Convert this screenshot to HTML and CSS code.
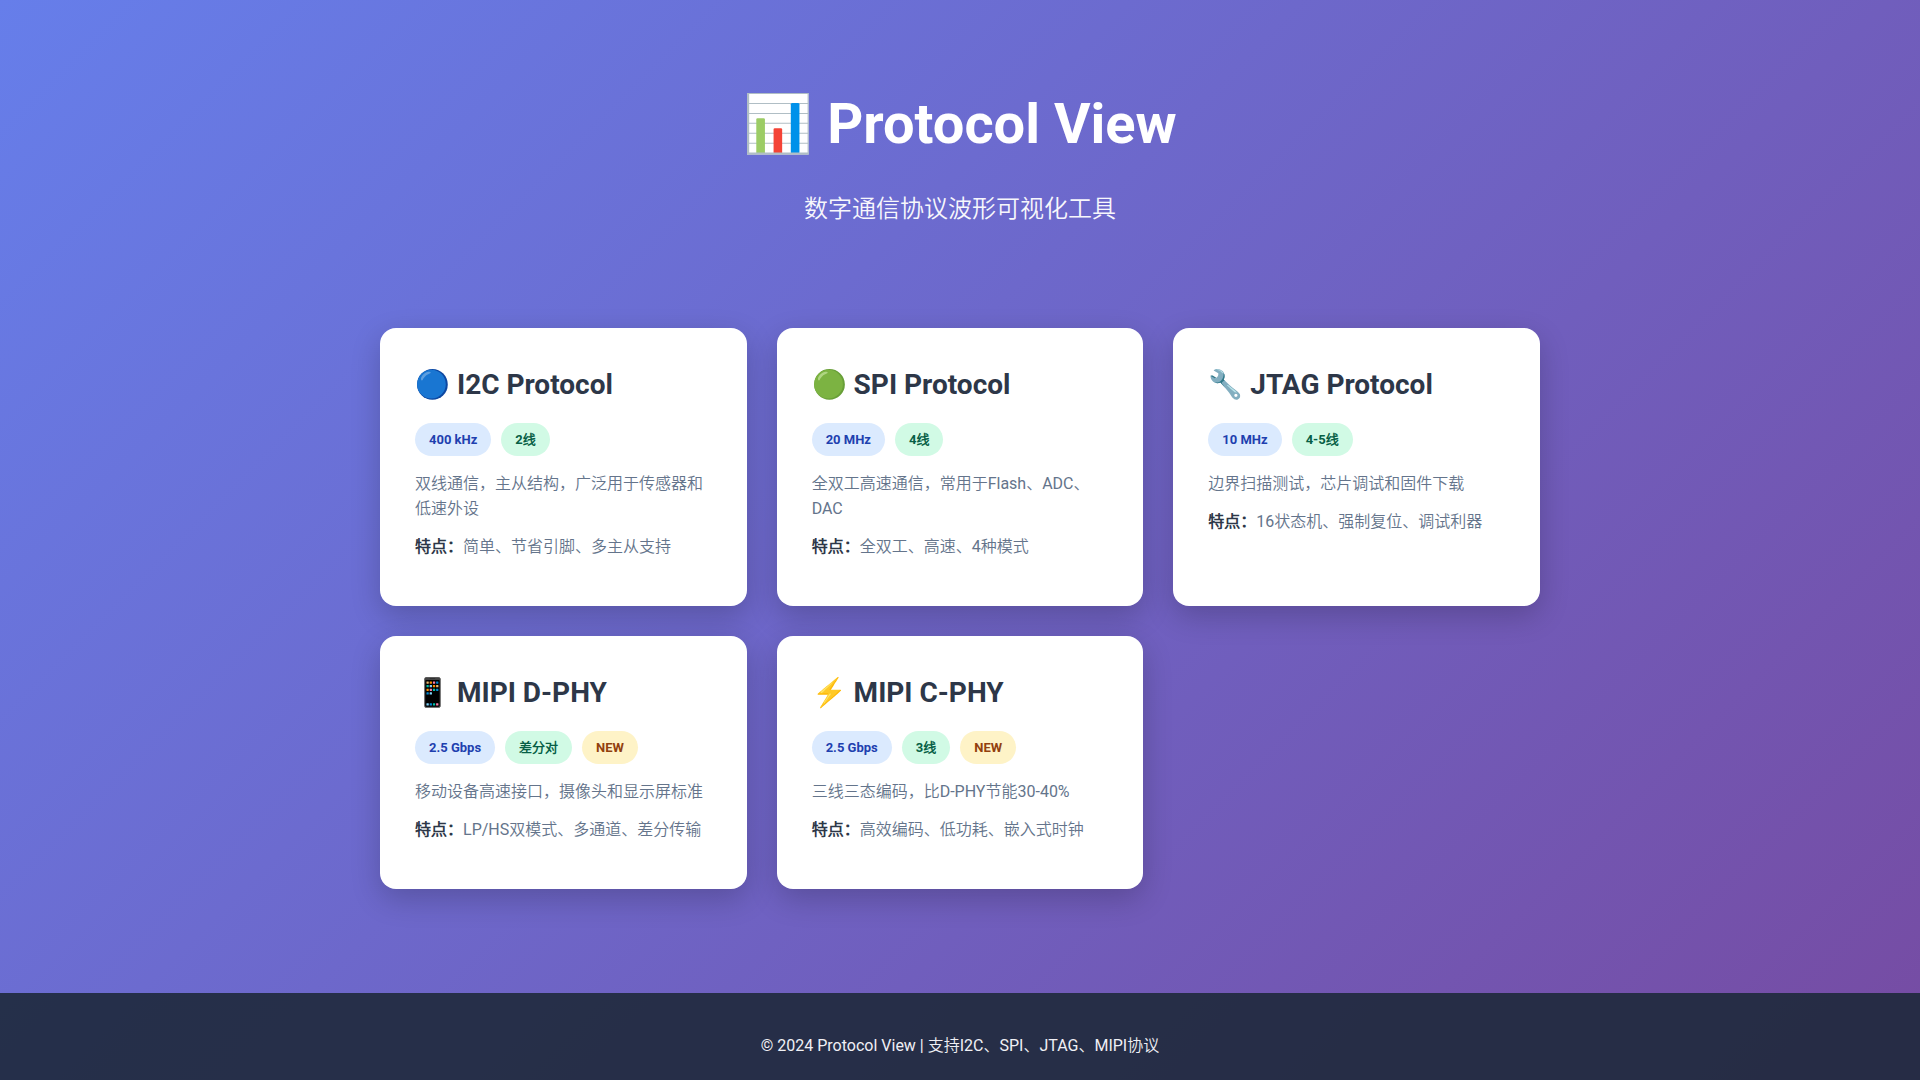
FILE: index.html
```html
<!DOCTYPE html>
<html lang="zh-CN">
<head>
    <meta charset="UTF-8">
    <meta name="viewport" content="width=device-width, initial-scale=1.0">
    <title>Protocol View</title>
    <link rel="stylesheet" href="styles.css">
</head>
<body>
    <header class="hero">
        <h1>📊 Protocol View</h1>
        <p>数字通信协议波形可视化工具</p>
    </header>

    <main class="protocols">
        <a class="card" href="#i2c">
            <h2>🔵 I2C Protocol</h2>
            <div class="badges">
                <span class="badge speed">400 kHz</span>
                <span class="badge wires">2线</span>
            </div>
            <p>双线通信，主从结构，广泛用于传感器和低速外设</p>
            <p><strong>特点：</strong>简单、节省引脚、多主从支持</p>
        </a>

        <a class="card" href="#spi">
            <h2>🟢 SPI Protocol</h2>
            <div class="badges">
                <span class="badge speed">20 MHz</span>
                <span class="badge wires">4线</span>
            </div>
            <p>全双工高速通信，常用于Flash、ADC、DAC</p>
            <p><strong>特点：</strong>全双工、高速、4种模式</p>
        </a>

        <a class="card" href="#jtag">
            <h2>🔧 JTAG Protocol</h2>
            <div class="badges">
                <span class="badge speed">10 MHz</span>
                <span class="badge wires">4-5线</span>
            </div>
            <p>边界扫描测试，芯片调试和固件下载</p>
            <p><strong>特点：</strong>16状态机、强制复位、调试利器</p>
        </a>

        <a class="card" href="#dphy">
            <h2>📱 MIPI D-PHY</h2>
            <div class="badges">
                <span class="badge speed">2.5 Gbps</span>
                <span class="badge wires">差分对</span>
                <span class="badge new">NEW</span>
            </div>
            <p>移动设备高速接口，摄像头和显示屏标准</p>
            <p><strong>特点：</strong>LP/HS双模式、多通道、差分传输</p>
        </a>

        <a class="card" href="#cphy">
            <h2>⚡ MIPI C-PHY</h2>
            <div class="badges">
                <span class="badge speed">2.5 Gbps</span>
                <span class="badge wires">3线</span>
                <span class="badge new">NEW</span>
            </div>
            <p>三线三态编码，比D-PHY节能30-40%</p>
            <p><strong>特点：</strong>高效编码、低功耗、嵌入式时钟</p>
        </a>
    </main>

    <footer class="footer">
        <p>© 2024 Protocol View | 支持I2C、SPI、JTAG、MIPI协议</p>
    </footer>
</body>
</html>
```

FILE: styles.css
```css
* {
    margin: 0;
    padding: 0;
    box-sizing: border-box;
}
body {
    min-height: 100vh;
    font-family: Roboto, "Noto Sans CJK SC DemiLight", "Noto Sans CJK SC", sans-serif;
    font-size: 16px;
    line-height: 25px;
    background: linear-gradient(135deg, #667eea 0%, #764ba2 100%);
}
.hero {
    padding: 80px 20px;
    text-align: center;
    color: #fff;
}
.hero h1 {
    margin-bottom: 22px;
    font-size: 56px;
    line-height: 88px;
}
.hero p {
    font-size: 24px;
    line-height: 38px;
    opacity: 0.95;
}
.protocols {
    width: 100%;
    max-width: 1200px;
    margin: 0 auto;
    padding: 20px 20px 104px;
    display: grid;
    grid-template-columns: repeat(auto-fit, minmax(320px, 1fr));
    gap: 30px;
}
.card {
    padding: 35px;
    background: #fff;
    border-radius: 16px;
    box-shadow: 0 10px 30px rgba(0, 0, 0, 0.2);
    color: #64748b;
    text-decoration: none;
}
.card h2 {
    margin-bottom: 16px;
    font-size: 28px;
    line-height: 44px;
    color: #2d3748;
}
.badges {
    display: flex;
    flex-wrap: wrap;
    gap: 10px;
    margin-bottom: 15px;
}
.badge {
    padding: 6px 14px;
    border-radius: 20px;
    font-size: 13px;
    font-weight: 700;
    line-height: 21px;
}
.speed {
    background: #dbeafe;
    color: #1e40af;
}
.wires {
    background: #d1fae5;
    color: #065f46;
}
.new {
    background: #fef3c7;
    color: #92400e;
}
.card p {
    margin-bottom: 12px;
}
.card p + p {
    margin-top: 13px;
}
.card strong {
    color: #2d3748;
}
.footer {
    padding: 40px 20px;
    text-align: center;
    color: #f0f0f5;
    background: rgba(30, 41, 59, 0.9);
}
```
